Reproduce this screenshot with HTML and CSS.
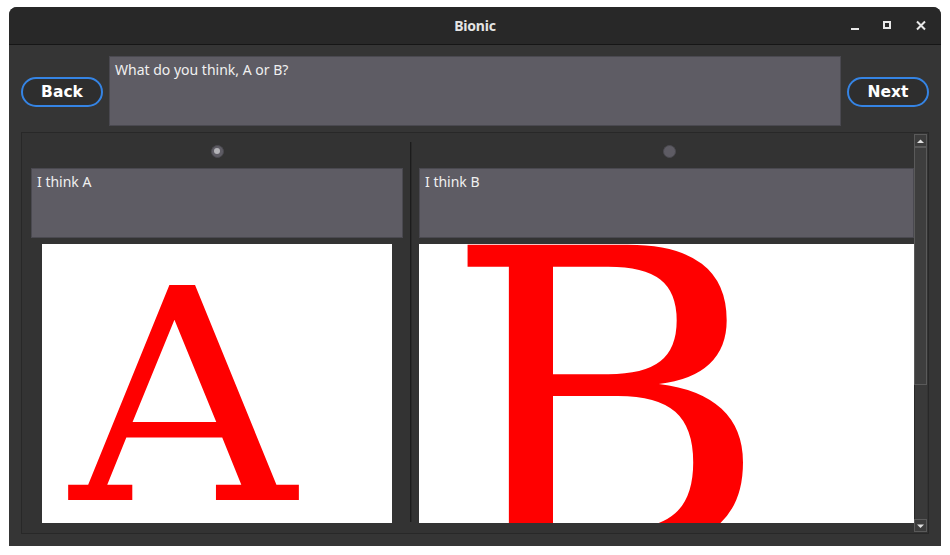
FILE: index.html
```html
<!DOCTYPE html>
<html>
<head>
<meta charset="utf-8">
<title>Bionic</title>
<link rel="stylesheet" href="styles.css">
</head>
<body>
<div class="window">
  <header class="titlebar">
    <span></span>
    <span class="title">Bionic</span>
    <div class="controls">
      <span class="ctl ctl-min"><svg width="12" height="12" viewBox="0 0 12 12"><rect x="2" y="8" width="8" height="2" fill="#e8e8e8"/></svg></span>
      <span class="ctl ctl-max"><svg width="12" height="12" viewBox="0 0 12 12"><rect x="3" y="2" width="6" height="6" fill="none" stroke="#e8e8e8" stroke-width="2"/></svg></span>
      <span class="ctl ctl-close"><svg width="12" height="12" viewBox="0 0 12 12"><path d="M2 1.5 L10 9.5 M10 1.5 L2 9.5" stroke="#e8e8e8" stroke-width="2"/></svg></span>
    </div>
  </header>
  <main class="content">
    <div class="toprow">
      <button class="pill">Back</button>
      <div class="field question">What do you think, A or B?</div>
      <button class="pill">Next</button>
    </div>
    <div class="scrollframe">
      <div class="viewport">
        <div class="choices">
          <section class="choice choice-a">
            <div class="radio-row"><span class="radio checked"></span></div>
            <div class="field answer">I think A</div>
            <div class="pic pic-a">
              <svg width="350" height="279" viewBox="0 0 350 279"><text x="0" y="256" transform="matrix(1.06 0 0 1 28 0)" class="glyph glyph-a">A</text></svg>
            </div>
          </section>
          <div class="splitter"></div>
          <section class="choice choice-b">
            <div class="radio-row"><span class="radio"></span></div>
            <div class="field answer">I think B</div>
            <div class="pic pic-b">
              <svg width="500" height="279" viewBox="0 0 500 279"><text x="0" y="307" transform="matrix(1.06 0 0 1 24 0)" class="glyph glyph-b">B</text></svg>
            </div>
          </section>
        </div>
      </div>
      <div class="scrollbar">
        <div class="sb-btn"><svg width="11" height="10" viewBox="0 0 11 10"><path d="M2 7 L5.5 3.5 L9 7 Z" fill="#e0e0e0"/></svg></div>
        <div class="sb-track"><div class="sb-thumb"></div></div>
        <div class="sb-btn"><svg width="11" height="10" viewBox="0 0 11 10"><path d="M2 3.5 L5.5 7 L9 3.5 Z" fill="#e0e0e0"/></svg></div>
      </div>
    </div>
  </main>
</div>
</body>
</html>
```
FILE: styles.css
```css
* { box-sizing: border-box; }
html, body { margin: 0; padding: 0; background: #ffffff; }
body { padding: 7px 0 0 9px; font-family: "Noto Sans", "DejaVu Sans", sans-serif; }

.window {
  width: 932px;
  height: 539px;
  background: #353535;
  border-radius: 8px 8px 0 0;
  overflow: hidden;
  display: flex;
  flex-direction: column;
}

.titlebar {
  height: 38px;
  flex: none;
  background: #282828;
  border-bottom: 1px solid #161616;
  display: grid;
  grid-template-columns: 1fr auto 1fr;
  align-items: center;
}
.title {
  color: #e4e4e4;
  font-size: 14px;
  font-weight: bold;
  letter-spacing: -0.2px;
}
.controls {
  display: flex;
  justify-content: flex-end;
  align-items: center;
  padding-right: 9px;
  gap: 10px;
}
.ctl { width: 22px; height: 22px; display: flex; align-items: center; justify-content: center; }
.ctl-close { margin-left: 2px; }
.ctl svg { display: block; }

.content {
  flex: 1;
  padding: 11px 12px 12px 12px;
  display: flex;
  flex-direction: column;
  gap: 6px;
}

.toprow {
  height: 70px;
  flex: none;
  display: flex;
  align-items: center;
  gap: 6px;
}
.pill {
  width: 82px;
  height: 30px;
  margin-top: 1px;
  border: 2px solid #3584e4;
  border-radius: 15px;
  background: #2e2e2e;
  color: #ffffff;
  font-family: "DejaVu Sans", sans-serif;
  font-weight: bold;
  font-size: 15.5px;
  padding: 0;
  display: flex;
  align-items: center;
  justify-content: center;
}

.field {
  background: #5e5c64;
  border: 1px solid #4a4950;
  color: #f0f0f0;
  font-size: 14px;
  line-height: 17px;
  padding: 4px 5px;
}
.question { flex: 1; height: 70px; }

.scrollframe {
  flex: 1;
  border: 1px solid #282828;
  background: #333333;
  display: flex;
  overflow: hidden;
}
.viewport {
  flex: 1;
  overflow: hidden;
}
.choices {
  display: flex;
  padding: 9px 0 0 9px;
  width: max-content;
}
.choice {
  display: flex;
  flex-direction: column;
}
.choice-a { width: 372px; }
.choice-b { width: 500px; }
.radio-row {
  height: 18px;
  margin-bottom: 8px;
  display: flex;
  justify-content: center;
  align-items: center;
}
.radio {
  width: 13px;
  height: 13px;
  border-radius: 50%;
  background: #5e5c64;
  border: 1px solid #4c4b51;
  display: flex;
  align-items: center;
  justify-content: center;
}
.radio.checked::after {
  content: "";
  width: 6px;
  height: 6px;
  border-radius: 50%;
  background: #b4b4b8;
}
.choice-a .answer { height: 70px; }
.choice-b .answer { height: 70px; width: 495px; }
.pic {
  margin-top: 6px;
  height: 279px;
  background: #ffffff;
  overflow: hidden;
}
.pic svg { display: block; }
.pic-a { width: 350px; align-self: center; }
.pic-b { width: 500px; }
.glyph { fill: #ff0000; font-family: "DejaVu Serif", serif; }
.glyph-a { font-size: 295px; }
.glyph-b { font-size: 420px; }

.splitter {
  width: 2px;
  height: 380px;
  margin: 0 7px 0 7px;
  background: #1c1c1c;
  border-right: 1px solid #2a2a2a;
}

.scrollbar {
  width: 14px;
  flex: none;
  display: flex;
  flex-direction: column;
  background: #333333;
  padding: 1px 1px 1px 0;
}
.sb-btn {
  height: 13px;
  flex: none;
  background: #3c3c3c;
  border: 1px solid #5a5a5a;
  display: flex;
  align-items: center;
  justify-content: center;
}
.sb-track {
  flex: 1;
  background: #393939;
  border-left: 1px solid #2a2a2a;
}
.sb-thumb {
  height: 238px;
  background: #3e3e3e;
  border: 1px solid #5a5a5a;
  margin-left: -1px;
}
```
